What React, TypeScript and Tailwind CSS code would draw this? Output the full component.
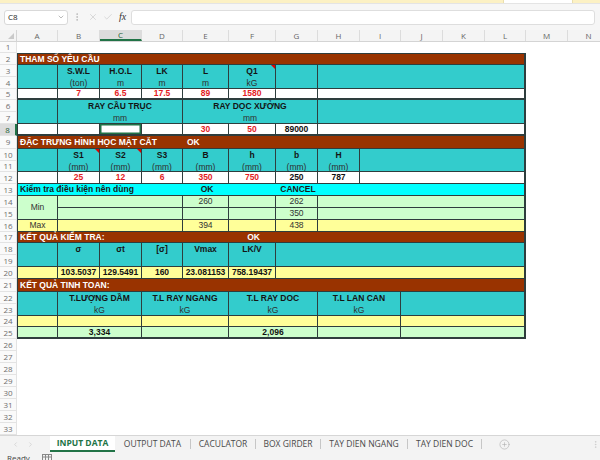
import React from 'react';
import { ChevronDown, EllipsisVertical, X, Check, ChevronLeft, ChevronRight, CirclePlus } from 'lucide-react';

const COLS = ['A', 'B', 'C', 'D', 'E', 'F', 'G', 'H', 'I', 'J', 'K', 'L', 'M', 'N'];
const COLW = ['w-[41px]', 'w-[42px]', 'w-[42px]', 'w-[41px]', 'w-[46px]', 'w-[47px]', 'w-[42px]', 'w-[42px]', 'w-[41px]', 'w-[42px]', 'w-[42px]', 'w-[41px]', 'w-[42px]', 'w-[42px]'];

const RS: Record<number, string> = {
  1: 'row-start-1', 2: 'row-start-2', 3: 'row-start-3', 4: 'row-start-4', 5: 'row-start-5', 6: 'row-start-6', 7: 'row-start-7', 8: 'row-start-8', 9: 'row-start-9', 10: 'row-start-10',
  11: 'row-start-11', 12: 'row-start-12', 13: 'row-start-13', 14: 'row-start-14', 15: 'row-start-15', 16: 'row-start-16', 17: 'row-start-17', 18: 'row-start-18', 19: 'row-start-19', 20: 'row-start-20',
  21: 'row-start-21', 22: 'row-start-22', 23: 'row-start-23', 24: 'row-start-24', 25: 'row-start-25', 26: 'row-start-26', 27: 'row-start-27', 28: 'row-start-28', 29: 'row-start-29', 30: 'row-start-30',
  31: 'row-start-31', 32: 'row-start-32', 33: 'row-start-33', 34: 'row-start-34',
};
const RSPAN: Record<number, string> = { 1: 'row-span-1', 2: 'row-span-2' };
const CST: Record<number, string> = {
  1: 'col-start-1', 2: 'col-start-2', 3: 'col-start-3', 4: 'col-start-4', 5: 'col-start-5', 6: 'col-start-6', 7: 'col-start-7', 8: 'col-start-8', 9: 'col-start-9', 10: 'col-start-10', 11: 'col-start-11', 12: 'col-start-12', 13: 'col-start-13',
};
const CSPAN: Record<number, string> = { 1: 'col-span-1', 2: 'col-span-2', 3: 'col-span-3', 4: 'col-span-4', 5: 'col-span-5', 6: 'col-span-6', 12: 'col-span-12' };

const BROWN = 'bg-[#993300]';
const CYAN = 'bg-[#33cccc]';
const AQUA = 'bg-[#00ffff]';
const GREEN = 'bg-[#ccffcc]';
const YELLOW = 'bg-[#ffff99]';
const WHITE = 'bg-white';

type CellProps = { r: number; c: number; rs?: number; cs?: number; bg: string; children?: React.ReactNode; cls?: string; note?: boolean };

function Cell({ r, c, rs = 1, cs = 1, bg, children, cls = '', note = false }: CellProps) {
  const thick = r + rs - 1 === 5 || r + rs - 1 === 8 ? 'border-b-2' : 'border-b';
  return (
    <div
      className={`${RS[r]} ${RSPAN[rs]} ${CST[c + 1]} ${CSPAN[cs]} ${bg} border-r ${thick} border-[#2e3d3d] ${c === 1 ? 'border-l' : ''} ${r === 2 ? 'border-t' : ''} ${c + cs - 1 === 12 ? 'border-r-2' : ''} relative overflow-visible ${cls}`}
    >
      {children}
      {note && (
        <div className="absolute right-0 top-0 h-0 w-0 border-l-[4px] border-t-[4px] border-l-transparent border-t-[#e00000]" />
      )}
    </div>
  );
}

function Two({ a, b }: { a: string; b: string }) {
  return (
    <div className="flex flex-col">
      <div className="h-[12px] flex items-center justify-center font-bold text-[#141414] whitespace-nowrap">{a}</div>
      <div className="h-[12px] flex items-center justify-center text-[#2f2f2f] whitespace-nowrap">{b}</div>
    </div>
  );
}

function One({ t, c = 'text-[#e31b23]', b = true }: { t: string; c?: string; b?: boolean }) {
  return <div className={`h-full flex items-center justify-center whitespace-nowrap ${b ? 'font-bold' : ''} ${c}`}>{t}</div>;
}

function Title({ children }: { children: React.ReactNode }) {
  return <div className="h-full flex items-center pl-[2px] font-bold text-white whitespace-nowrap">{children}</div>;
}

export default function App() {
  const rowNums = Array.from({ length: 34 }, (_, i) => i + 1);
  const BLACK = 'text-[#111111]';
  const GRAY = 'text-[#333333]';

  return (
    <div className="w-[600px] h-[460px] overflow-hidden flex flex-col bg-white font-['Open_Sans','Noto_Sans',sans-serif]">
      {/* message strip */}
      <div className="h-[4px] shrink-0 flex bg-[#fcf1c4] border-b border-[#e4e4e4]">
        <div className="ml-[503px] w-[70px] bg-white border-x border-[#eadfae]" />
      </div>
      {/* formula bar */}
      <div className="h-[26px] shrink-0 flex items-center bg-[#f6f6f6]">
        <div className="ml-[4px] w-[64px] h-[15px] bg-white border border-[#d9d9d9] rounded-[3px] flex items-center justify-between pl-[3px] pr-[2px]">
          <span className="text-[8px] text-[#222] leading-none">C8</span>
          <ChevronDown size={8} className="text-[#777]" strokeWidth={1.5} />
        </div>
        <EllipsisVertical size={10} className="ml-[4px] text-[#aaa]" strokeWidth={1.5} />
        <X size={10} className="ml-[6px] text-[#bdbdbd]" strokeWidth={1.3} />
        <Check size={10} className="ml-[5px] text-[#bdbdbd]" strokeWidth={1.3} />
        <span className="ml-[6px] text-[10px] italic text-[#333] font-['Liberation_Serif',serif] leading-none">fx</span>
        <div className="ml-[5px] w-[464px] h-[15px] bg-white border border-[#dedede] rounded-[3px]" />
      </div>
      {/* column header */}
      <div className="h-[12px] shrink-0 flex bg-[#f4f4f4] border-b border-[#d4d4d4] text-[8px] text-[#666] leading-none">
        <div className="w-[17px] shrink-0 relative border-r border-[#d4d4d4]">
          <div className="absolute right-[2px] bottom-[2px] h-0 w-0 border-l-[6px] border-b-[6px] border-l-transparent border-b-[#c9c9c9]" />
        </div>
        {COLS.map((l, i) => (
          <div
            key={l}
            className={`${COLW[i]} shrink-0 flex items-center justify-center border-r border-[#dcdcdc] ${l === 'C' ? 'bg-[#dcdcdc] border-b-2 border-b-[#217346] text-[#1d5e36]' : ''}`}
          >
            {l}
          </div>
        ))}
      </div>
      {/* sheet */}
      <div className="h-[393px] shrink-0 overflow-hidden">
        <div className="grid grid-cols-[17px_41px_42px_42px_41px_46px_47px_42px_42px_41px_42px_42px_41px_42px_42px] grid-rows-[11px_12px_12px_12px_11px_12px_12px_12px_13px_12px_11px_12px_12px_12px_12px_12px_11px_12px_12px_12px_13px_12px_12px_11px_12px_12px_12px_12px_12px_12px_12px_12px_12px_12px] w-[610px] font-['Liberation_Sans',Arial,sans-serif] text-[8.5px] leading-none">
          {rowNums.map((n) => (
            <div
              key={n}
              className={`${RS[n]} col-start-1 flex items-center justify-center border-r border-b border-[#e3e3e3] text-[8px] font-['Open_Sans','Noto_Sans',sans-serif] ${n === 8 ? 'bg-[#dcdcdc] border-r-2 border-r-[#217346] text-[#1d5e36]' : 'bg-[#fafafa] text-[#6e6e6e]'}`}
            >
              {n}
            </div>
          ))}

          {/* Row 2 */}
          <Cell r={2} c={1} cs={12} bg={BROWN}><Title>THAM SỐ YÊU CẦU</Title></Cell>

          {/* Rows 3-4 */}
          <Cell r={3} c={1} rs={2} bg={CYAN} />
          <Cell r={3} c={2} rs={2} bg={CYAN}><Two a="S.W.L" b="(ton)" /></Cell>
          <Cell r={3} c={3} rs={2} bg={CYAN}><Two a="H.O.L" b="m" /></Cell>
          <Cell r={3} c={4} rs={2} bg={CYAN}><Two a="LK" b="m" /></Cell>
          <Cell r={3} c={5} rs={2} bg={CYAN}><Two a="L" b="m" /></Cell>
          <Cell r={3} c={6} rs={2} bg={CYAN} note><Two a="Q1" b="kG" /></Cell>
          <Cell r={3} c={7} rs={2} bg={CYAN} />
          <Cell r={3} c={8} rs={2} cs={5} bg={CYAN} />

          {/* Row 5 */}
          <Cell r={5} c={1} bg={WHITE} />
          <Cell r={5} c={2} bg={WHITE}><One t="7" /></Cell>
          <Cell r={5} c={3} bg={WHITE}><One t="6.5" /></Cell>
          <Cell r={5} c={4} bg={WHITE}><One t="17.5" /></Cell>
          <Cell r={5} c={5} bg={WHITE}><One t="89" /></Cell>
          <Cell r={5} c={6} bg={WHITE}><One t="1580" /></Cell>
          <Cell r={5} c={7} bg={WHITE} />
          <Cell r={5} c={8} cs={5} bg={WHITE} />

          {/* Rows 6-7 */}
          <Cell r={6} c={1} rs={2} bg={CYAN} />
          <Cell r={6} c={2} rs={2} cs={3} bg={CYAN}><Two a="RAY CẦU TRỤC" b="mm" /></Cell>
          <Cell r={6} c={5} rs={2} cs={3} bg={CYAN}><Two a="RAY DỌC XƯỞNG" b="mm" /></Cell>
          <Cell r={6} c={8} rs={2} cs={5} bg={CYAN} />

          {/* Row 8 */}
          <Cell r={8} c={1} bg={WHITE} />
          <Cell r={8} c={2} bg={WHITE} />
          <Cell r={8} c={3} bg={WHITE} cls="ring-[1.5px] ring-inset ring-[#217346]" />
          <Cell r={8} c={4} bg={WHITE} />
          <Cell r={8} c={5} bg={WHITE}><One t="30" /></Cell>
          <Cell r={8} c={6} bg={WHITE}><One t="50" /></Cell>
          <Cell r={8} c={7} bg={WHITE}><One t="89000" c={BLACK} /></Cell>
          <Cell r={8} c={8} cs={5} bg={WHITE} />

          {/* Row 9 */}
          <Cell r={9} c={1} cs={12} bg={BROWN}>
            <div className="h-full flex items-center font-bold text-white whitespace-nowrap">
              <div className="w-[166px] pl-[2px]">ĐẶC TRƯNG HÌNH HỌC MẶT CẮT</div>
              <div className="pl-[3px]">OK</div>
            </div>
          </Cell>

          {/* Rows 10-11 */}
          <Cell r={10} c={1} rs={2} bg={CYAN} />
          <Cell r={10} c={2} rs={2} bg={CYAN} note><Two a="S1" b="(mm)" /></Cell>
          <Cell r={10} c={3} rs={2} bg={CYAN} note><Two a="S2" b="(mm)" /></Cell>
          <Cell r={10} c={4} rs={2} bg={CYAN}><Two a="S3" b="(mm)" /></Cell>
          <Cell r={10} c={5} rs={2} bg={CYAN}><Two a="B" b="(mm)" /></Cell>
          <Cell r={10} c={6} rs={2} bg={CYAN}><Two a="h" b="(mm)" /></Cell>
          <Cell r={10} c={7} rs={2} bg={CYAN}><Two a="b" b="(mm)" /></Cell>
          <Cell r={10} c={8} rs={2} bg={CYAN}><Two a="H" b="(mm)" /></Cell>
          <Cell r={10} c={9} rs={2} cs={4} bg={CYAN} />

          {/* Row 12 */}
          <Cell r={12} c={1} bg={WHITE} />
          <Cell r={12} c={2} bg={WHITE}><One t="25" /></Cell>
          <Cell r={12} c={3} bg={WHITE}><One t="12" /></Cell>
          <Cell r={12} c={4} bg={WHITE}><One t="6" /></Cell>
          <Cell r={12} c={5} bg={WHITE}><One t="350" /></Cell>
          <Cell r={12} c={6} bg={WHITE}><One t="750" /></Cell>
          <Cell r={12} c={7} bg={WHITE}><One t="250" c={BLACK} /></Cell>
          <Cell r={12} c={8} bg={WHITE}><One t="787" c={BLACK} /></Cell>
          <Cell r={12} c={9} cs={4} bg={WHITE} />

          {/* Row 13 */}
          <Cell r={13} c={1} cs={12} bg={AQUA}>
            <div className="h-full flex items-center font-bold text-[#1a1a1a] whitespace-nowrap">
              <div className="w-[166px] pl-[2px]">Kiểm tra điều kiện nên dùng</div>
              <div className="w-[46px] text-center">OK</div>
              <div className="w-[47px]" />
              <div className="w-[42px] text-center">CANCEL</div>
            </div>
          </Cell>

          {/* Rows 14-15 */}
          <Cell r={14} c={1} rs={2} bg={GREEN}><One t="Min" c={GRAY} b={false} /></Cell>
          <Cell r={14} c={2} cs={3} bg={GREEN} />
          <Cell r={14} c={5} bg={GREEN}><One t="260" c={GRAY} b={false} /></Cell>
          <Cell r={14} c={6} bg={GREEN} />
          <Cell r={14} c={7} bg={GREEN}><One t="262" c={GRAY} b={false} /></Cell>
          <Cell r={14} c={8} cs={5} bg={GREEN} />
          <Cell r={15} c={2} cs={3} bg={GREEN} />
          <Cell r={15} c={5} bg={GREEN} />
          <Cell r={15} c={6} bg={GREEN} />
          <Cell r={15} c={7} bg={GREEN}><One t="350" c={GRAY} b={false} /></Cell>
          <Cell r={15} c={8} cs={5} bg={GREEN} />

          {/* Row 16 */}
          <Cell r={16} c={1} bg={YELLOW}><One t="Max" c={GRAY} b={false} /></Cell>
          <Cell r={16} c={2} cs={3} bg={YELLOW} />
          <Cell r={16} c={5} bg={YELLOW}><One t="394" c={GRAY} b={false} /></Cell>
          <Cell r={16} c={6} bg={YELLOW} />
          <Cell r={16} c={7} bg={YELLOW}><One t="438" c={GRAY} b={false} /></Cell>
          <Cell r={16} c={8} cs={5} bg={YELLOW} />

          {/* Row 17 */}
          <Cell r={17} c={1} cs={12} bg={BROWN}>
            <div className="h-full flex items-center font-bold text-white whitespace-nowrap">
              <div className="w-[212px] pl-[2px]">KẾT QUẢ KIỂM TRA:</div>
              <div className="w-[47px] text-center">OK</div>
            </div>
          </Cell>

          {/* Rows 18-19 */}
          <Cell r={18} c={1} rs={2} bg={CYAN} />
          <Cell r={18} c={2} rs={2} bg={CYAN}><Two a="σ" b="" /></Cell>
          <Cell r={18} c={3} rs={2} bg={CYAN}><Two a="σt" b="" /></Cell>
          <Cell r={18} c={4} rs={2} bg={CYAN}><Two a="[σ]" b="" /></Cell>
          <Cell r={18} c={5} rs={2} bg={CYAN}><Two a="Vmax" b="" /></Cell>
          <Cell r={18} c={6} rs={2} bg={CYAN}><Two a="LK/V" b="" /></Cell>
          <Cell r={18} c={7} rs={2} cs={6} bg={CYAN} />

          {/* Row 20 */}
          <Cell r={20} c={1} bg={YELLOW} />
          <Cell r={20} c={2} bg={YELLOW}><One t="103.5037" c={BLACK} /></Cell>
          <Cell r={20} c={3} bg={YELLOW}><One t="129.5491" c={BLACK} /></Cell>
          <Cell r={20} c={4} bg={YELLOW}><One t="160" c={BLACK} /></Cell>
          <Cell r={20} c={5} bg={YELLOW}><One t="23.081153" c={BLACK} /></Cell>
          <Cell r={20} c={6} bg={YELLOW}><One t="758.19437" c={BLACK} /></Cell>
          <Cell r={20} c={7} cs={6} bg={YELLOW} />

          {/* Row 21 */}
          <Cell r={21} c={1} cs={12} bg={BROWN}><Title>KẾT QUẢ TINH TOAN:</Title></Cell>

          {/* Rows 22-23 */}
          <Cell r={22} c={1} rs={2} bg={CYAN} />
          <Cell r={22} c={2} rs={2} cs={2} bg={CYAN}><Two a="T.LƯỢNG DẦM" b="kG" /></Cell>
          <Cell r={22} c={4} rs={2} cs={2} bg={CYAN}><Two a="T.L RAY NGANG" b="kG" /></Cell>
          <Cell r={22} c={6} rs={2} cs={2} bg={CYAN}><Two a="T.L RAY DOC" b="kG" /></Cell>
          <Cell r={22} c={8} rs={2} cs={2} bg={CYAN}><Two a="T.L LAN CAN" b="kG" /></Cell>
          <Cell r={22} c={10} rs={2} cs={3} bg={CYAN} />

          {/* Row 24 */}
          <Cell r={24} c={1} bg={YELLOW} />
          <Cell r={24} c={2} cs={2} bg={YELLOW} />
          <Cell r={24} c={4} cs={2} bg={YELLOW} />
          <Cell r={24} c={6} cs={2} bg={YELLOW} />
          <Cell r={24} c={8} cs={2} bg={YELLOW} />
          <Cell r={24} c={10} cs={3} bg={YELLOW} />

          {/* Row 25 */}
          <Cell r={25} c={1} bg={GREEN} cls="border-b-2" />
          <Cell r={25} c={2} cs={2} bg={GREEN} cls="border-b-2"><One t="3,334" c={BLACK} /></Cell>
          <Cell r={25} c={4} cs={2} bg={GREEN} cls="border-b-2" />
          <Cell r={25} c={6} cs={2} bg={GREEN} cls="border-b-2"><One t="2,096" c={BLACK} /></Cell>
          <Cell r={25} c={8} cs={2} bg={GREEN} cls="border-b-2" />
          <Cell r={25} c={10} cs={3} bg={GREEN} cls="border-b-2" />
        </div>
      </div>
      {/* sheet tabs */}
      <div className="h-[17px] shrink-0 flex items-center bg-[#f3f3f3] border-t border-[#d6d6d6] text-[8.5px] leading-none text-[#4a4a4a] relative">
        <ChevronLeft size={7} className="ml-[12px] text-[#b5b5b5]" strokeWidth={1.5} />
        <ChevronRight size={7} className="ml-[8px] text-[#b5b5b5]" strokeWidth={1.5} />
        <div className="ml-[16px] w-[65px] h-full flex items-center justify-center font-bold text-[#217346] border-b-2 border-[#217346] bg-white">INPUT DATA</div>
        <div className="w-[75px] text-center">OUTPUT DATA</div>
        <div className="w-px h-[10px] bg-[#c6c6c6]" />
        <div className="w-[64px] text-center">CACULATOR</div>
        <div className="w-px h-[10px] bg-[#c6c6c6]" />
        <div className="w-[64px] text-center">BOX GIRDER</div>
        <div className="w-px h-[10px] bg-[#c6c6c6]" />
        <div className="w-[86px] text-center">TAY DIEN NGANG</div>
        <div className="w-px h-[10px] bg-[#c6c6c6]" />
        <div className="w-[73px] text-center">TAY DIEN DOC</div>
        <div className="w-px h-[10px] bg-[#c6c6c6]" />
        <CirclePlus size={11} className="ml-[17px] text-[#a8a8a8]" strokeWidth={1.2} />
        <EllipsisVertical size={9} className="ml-auto mr-[0px] text-[#c4c4c4]" strokeWidth={1.5} />
      </div>
      {/* status bar */}
      <div className="h-[20px] shrink-0 flex items-start pt-[2px] bg-[#f3f3f3] text-[8px] leading-none text-[#444]">
        <span className="ml-[7px]">Ready</span>
        <svg width="10" height="8" viewBox="0 0 10 8" className="ml-[12px]">
          <rect x="0.5" y="0.5" width="9" height="7" fill="none" stroke="#888" />
          <line x1="0.5" y1="3" x2="9.5" y2="3" stroke="#888" />
          <line x1="3.5" y1="0.5" x2="3.5" y2="7.5" stroke="#888" />
          <line x1="6.5" y1="0.5" x2="6.5" y2="7.5" stroke="#888" />
        </svg>
      </div>
    </div>
  );
}
